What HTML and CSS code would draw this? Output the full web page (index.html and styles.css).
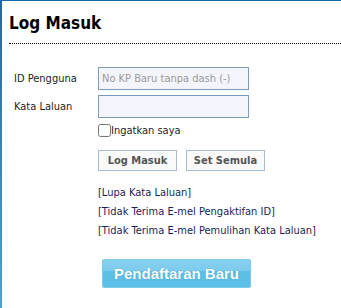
FILE: index.html
```html
<!DOCTYPE html>
<html lang="ms">
<head>
  <meta charset="UTF-8">
  <title>Log Masuk</title>
  <link rel="stylesheet" href="styles.css">
</head>
<body>
<div class="page">
  <h1>Log Masuk</h1>
  <div class="rule"></div>

  <form class="login">
    <label for="uid">ID Pengguna</label>
    <input type="text" id="uid" placeholder="No KP Baru tanpa dash (-)">
    <label for="pwd">Kata Laluan</label>
    <input type="password" id="pwd">
    <span></span>
    <label class="remember"><input type="checkbox"><span>Ingatkan saya</span></label>
    <span></span>
    <div class="actions">
      <button type="button" class="btn">Log Masuk</button>
      <button type="reset" class="btn">Set Semula</button>
    </div>
    <span></span>
    <div class="links">
      <a href="#">[Lupa Kata Laluan]</a>
      <a href="#">[Tidak Terima E-mel Pengaktifan ID]</a>
      <a href="#">[Tidak Terima E-mel Pemulihan Kata Laluan]</a>
    </div>
  </form>

  <div class="register">
    <a href="#" class="btn-register">Pendaftaran Baru</a>
  </div>
</div>
</body>
</html>
```

FILE: styles.css
```css
html, body { margin:0; padding:0; background:#fff; }
body { font-family:"DejaVu Sans Condensed", "DejaVu Sans", Verdana, sans-serif; font-size:11px; color:#222; }
.page { height:307px; border-left:2px solid; border-image:linear-gradient(#1f6aa6, #43a5d6) 1; border-top:1px solid #1b5a92; padding-left:7px; }
h1 { margin:0; padding-top:11px; font-size:17px; line-height:22px; font-weight:bold; color:#000; }
.rule { margin-top:9px; border-top:1px dotted #000; }

/* form */
.login { display:grid; grid-template-columns:84px auto; align-items:center; row-gap:5px; padding-left:5px; margin-top:23px; }
.login label { color:#222; }
.login input[type=text], .login input[type=password] { width:151px; height:23px; box-sizing:border-box; border:1px solid #7f9ab5; background:#f4f4fc; padding:0 3px; font-family:inherit; font-size:11px; }
.login input::placeholder { color:#9a9a9a; }
.remember { display:flex; align-items:center; margin-top:1px; }
.remember input { margin:0; width:13px; height:13px; }
.actions { display:flex; gap:9px; margin-top:8px; }
.btn { width:79px; height:21px; border:1px solid #a9bccf; background:#fafafa; color:#555; font-family:inherit; font-size:11px; font-weight:bold; padding:0; }
.links { display:flex; flex-direction:column; margin-top:7px; line-height:19px; }
.links a { color:#1c1c5c; text-decoration:none; }

/* register */
.register { padding-left:93px; margin-top:19px; }
.btn-register { display:block; width:147px; height:27px; line-height:27px; text-align:center; border:1px solid #7ccbec; border-radius:2px; background:linear-gradient(#86d0ee 0, #7ccbec 40%, #5cbfe5 42%, #5cbfe5 100%); color:#fff; font-family:"Liberation Sans", Arial, sans-serif; font-size:15px; font-weight:bold; text-decoration:none; text-shadow:0 0 1px #3f93bb; }
```
